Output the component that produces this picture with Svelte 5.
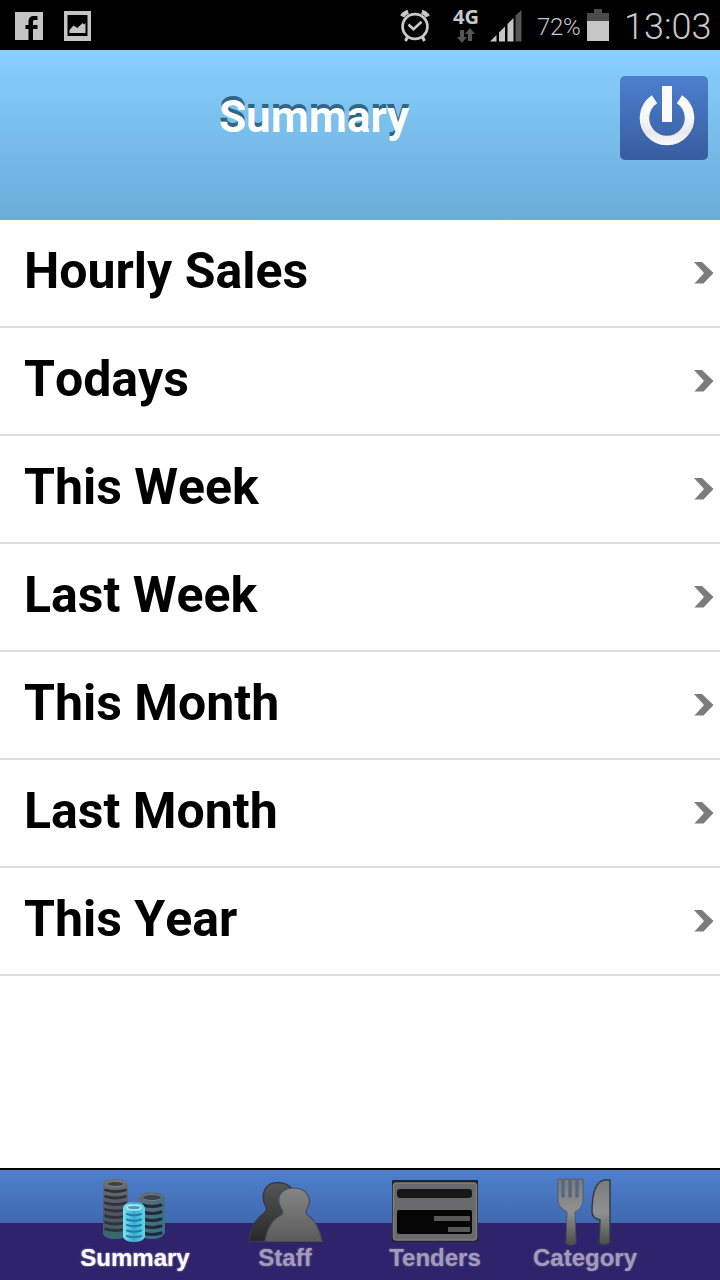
<script>
  const reports = [
    "Hourly Sales",
    "Todays",
    "This Week",
    "Last Week",
    "This Month",
    "Last Month",
    "This Year"
  ];

  const tabs = ["Summary", "Staff", "Tenders", "Category"];

  let active = "Summary";

  const tallStack = [0, 1, 2, 3, 4, 5, 6];
  const sideStack = [0, 1, 2, 3, 4];
  const frontStack = [0, 1, 2, 3, 4];
</script>

<div class="screen">
  <div class="status">
    <svg class="fb" width="28" height="28" viewBox="0 0 28 28">
      <rect width="28" height="28" fill="#c4c4c4" />
      <path d="M13.500 28V17h-3v-4h3V10C13.500 5.800 15.500 4 19 4h3.500v4H20c-1.500 0-2 .5-2 2v3h4.500v4H18v11z" fill="#000" />
    </svg>
    <svg class="photo" width="27" height="30" viewBox="0 0 27 30">
      <path d="M0 0h27v30H0zM3.500 4v21h20V4z" fill="#c4c4c4" fill-rule="evenodd" />
      <path d="M5.500 22v-3l4-4.500 4 2.500 5-5 1.500 1.500 1.500-1.500v10z" fill="#c4c4c4" />
    </svg>
    <svg class="alarm" width="30" height="33" viewBox="0 0 30 33">
      <g fill="none" stroke="#c8c8c8">
        <circle cx="15" cy="17.500" r="12.400" stroke-width="2.800" />
        <path d="M8.500 15.500l5 4.700 8-7.400" stroke-width="2.600" />
        <path d="M2.200 7.500Q4 4 8.200 2.800M27.800 7.500Q26 4 21.800 2.800" stroke-width="4.500" />
        <path d="M7.500 28l-2 4M22.500 28l2 4" stroke-width="3" />
      </g>
    </svg>
    <div class="network">
      <span>4G</span>
      <svg width="18" height="16" viewBox="0 0 18 16">
        <path d="M3 2h4v7h3l-5 6-5-6h3zM11 13h4V6h3l-5-6-5 6h3z" fill="#555" />
      </svg>
    </div>
    <svg class="signal" width="32" height="32" viewBox="0 0 32 32">
      <path d="M0 31.500l6.500-6.500v6.500zM9 31.500v-9l6-6v15zM17.500 31.500V14L23.500 8v23.500z" fill="#c6c6c6" />
      <path d="M25.500 31.500V5.500L31.500 0v31.500z" fill="#555" />
    </svg>
    <span class="percent">72%</span>
    <svg class="battery" width="22" height="32" viewBox="0 0 22 32">
      <path d="M0 12V4h7V0h8v4h7v8z" fill="#4b4b4b" />
      <rect y="12" width="22" height="20" fill="#c6c6c6" />
    </svg>
    <span class="clock">13:03</span>
  </div>

  <header>
    <h1>Summary</h1>
    <button class="power" aria-label="Log out">
      <svg width="56" height="62" viewBox="0 0 56 62">
        <defs>
          <linearGradient id="powerFill" x1="0" y1="0" x2="0" y2="62" gradientUnits="userSpaceOnUse">
            <stop offset="0" stop-color="#fff" />
            <stop offset=".5" stop-color="#f8f8fa" />
            <stop offset=".75" stop-color="#e8e8ec" />
            <stop offset="1" stop-color="#fff" />
          </linearGradient>
        </defs>
        <path d="M15.500 13.300A22.500 22.500 0 1 0 40.500 13.300" fill="none" stroke="url(#powerFill)" stroke-width="9.500" />
        <rect x="23" y="0" width="10" height="36" fill="#fafaff" />
      </svg>
    </button>
  </header>

  <ul>
    {#each reports as report}
      <li>
        <span>{report}</span>
        <svg width="20" height="22" viewBox="0 0 20 22">
          <path d="M0 0H8L19.500 11 9.500 21.500H.5L10 11z" fill="#7c7c7c" />
        </svg>
      </li>
    {/each}
  </ul>

  <nav>
    {#each tabs as tab}
      <button class="tab" class:active={tab === active} on:click={() => (active = tab)}>
        {#if tab === "Summary"}
          <svg width="72" height="70" viewBox="-2 0 72 70">
            <defs>
              <linearGradient id="stackTall" x1="0" y1="0" x2="0" y2="1">
                <stop offset="0" stop-color="#6d6f73" />
                <stop offset=".6" stop-color="#4f5662" />
                <stop offset="1" stop-color="#38696f" />
              </linearGradient>
              <linearGradient id="stackSide" x1="0" y1="0" x2="1" y2="1">
                <stop offset="0" stop-color="#66696f" />
                <stop offset="1" stop-color="#2b7589" />
              </linearGradient>
              <linearGradient id="stackFront" x1="0" y1="0" x2="1" y2="0">
                <stop offset="0" stop-color="#7be4f2" />
                <stop offset=".5" stop-color="#3ba9d0" />
                <stop offset="1" stop-color="#5fd6ec" />
              </linearGradient>
            </defs>
            <path d="M2 13Q3 8 14 8T27 13V63Q24 68 14 68T2 63z" fill="url(#stackTall)" />
            <ellipse cx="14.500" cy="13" rx="8.500" ry="2.500" fill="#3e4148" stroke="#858585" />
            {#each tallStack as n}
              <path d="M4.500 {19 + n * 6.500}q10 3 20 0" fill="none" stroke="#30323b" stroke-width="2.800" stroke-linecap="round" />
            {/each}
            <path d="M38 27Q40 21 51 21T64 27V62Q61 68 51 68T38 62z" fill="url(#stackSide)" />
            <ellipse cx="51" cy="26.500" rx="9.500" ry="3" fill="#3c4450" stroke="#777b82" />
            {#each sideStack as n}
              <path d="M42 {34 + n * 7}q9 3 18 0" fill="none" stroke="#202a3c" stroke-width="3" stroke-linecap="round" />
            {/each}
            <path d="M22 37Q23 31 33 31T44 37V66Q42 71 33 71T22 66z" fill="url(#stackFront)" />
            <ellipse cx="33" cy="36.500" rx="7" ry="2.500" fill="#4a9dc5" stroke="#b7edf6" stroke-width="1.500" />
            {#each frontStack as n}
              <path d="M26 {43 + n * 5.500}q7 2.500 14 0" fill="none" stroke="#207fa8" stroke-width="2" stroke-linecap="round" />
            {/each}
          </svg>
        {:else if tab === "Staff"}
          <svg width="76" height="70" viewBox="0 0 76 70">
            <defs>
              <linearGradient id="personBack" x1="0" y1="0" x2="0" y2="1">
                <stop offset="0" stop-color="#565656" />
                <stop offset="1" stop-color="#282828" />
              </linearGradient>
              <linearGradient id="personFront" x1="0" y1="0" x2="0" y2="1">
                <stop offset="0" stop-color="#858585" />
                <stop offset="1" stop-color="#5b5b5b" />
              </linearGradient>
            </defs>
            <path d="M2 70.500C3 58 9 48 17 42C20 40 20 37 18 34C13 22 19 11.500 31 11.500S51 22 48 33L38 70.500z" fill="url(#personBack)" stroke="#333b49" stroke-width="1.500" />
            <path d="M18 70.500C20 57 26 48 34 44C37 42 36 40 34 37C28 26 34 17 47 17S66 28 60 38C58 41 59 43 62 45C70 51 73 60 75 70.500z" fill="url(#personFront)" stroke="#454c58" stroke-width="1.200" />
          </svg>
        {:else if tab === "Tenders"}
          <svg width="86" height="70" viewBox="0 0 86 70">
            <rect y="9" width="86" height="62" rx="1" fill="#202329" />
            <rect x="1.500" y="12" width="83" height="57" rx="3" fill="#696a6b" stroke="#7b7d80" stroke-width="1.500" />
            <rect x="5" y="18" width="75" height="9" rx="3" fill="#171717" />
            <rect x="5" y="39" width="75" height="24" rx="2" fill="#050505" />
            <path d="M42 47.500h36M56 58.500h22" stroke="#575757" stroke-width="5" />
          </svg>
        {:else}
          <svg width="56" height="70" viewBox="0 0 56 70">
            <defs>
              <linearGradient id="cutlery" x1="0" y1="0" x2="0" y2="1">
                <stop offset="0" stop-color="#7b7b7b" />
                <stop offset=".5" stop-color="#919191" />
                <stop offset="1" stop-color="#4b4b4b" />
              </linearGradient>
            </defs>
            <path d="M1 8h4v18h2V8h5v18h2V8h5v18h2V8h5v21q0 8-8 12l1 31q-5 4-10 0l1-31q-9-5-9-12z" fill="url(#cutlery)" stroke="#4b515a" stroke-width=".8" />
            <path d="M53 9v63q-6 4-11 0l1-23q-8-2-8-8C35 28 37 10 48 9z" fill="url(#cutlery)" stroke="#343a44" stroke-width="1.500" />
          </svg>
        {/if}
        <span>{tab}</span>
      </button>
    {/each}
  </nav>
</div>

<style>
  :global(body) {
    margin: 0;
    background: #fff;
  }

  .screen {
    display: flex;
    flex-direction: column;
    width: 720px;
    height: 1280px;
    overflow: hidden;
    font-family: Roboto, sans-serif;
  }

  svg {
    display: block;
    flex: none;
  }

  .status {
    display: flex;
    align-items: flex-start;
    flex: none;
    height: 50px;
    background: #000;
    color: #c8c8c8;
  }

  .fb {
    margin: 12px 0 0 15px;
  }

  .photo {
    margin: 11px 0 0 21px;
  }

  .alarm {
    margin: 9px 0 0 309px;
  }

  .network {
    display: flex;
    flex-direction: column;
    align-items: center;
    width: 30px;
    margin: 7px 0 0 21px;
    font: bold 20px/20px "Open Sans", sans-serif;
  }

  .network svg {
    margin-top: 1px;
  }

  .signal {
    margin: 10px 0 0 9px;
  }

  .percent {
    width: 50px;
    margin-left: 15px;
    font-size: 24px;
    font-weight: 350;
    letter-spacing: -0.3px;
    line-height: 54px;
  }

  .battery {
    margin-top: 9px;
  }

  .clock {
    margin-left: 15px;
    font-size: 36px;
    font-weight: 350;
    line-height: 54px;
    white-space: nowrap;
  }

  header {
    display: flex;
    align-items: flex-start;
    justify-content: space-between;
    box-sizing: border-box;
    flex: none;
    height: 170px;
    padding: 26px 12px 0 219px;
    background: linear-gradient(#88cfff, #69add8);
  }

  h1 {
    margin: 0;
    color: #fff;
    font-size: 44px;
    line-height: 82px;
    text-shadow: 0 -4px 0 #2f6585;
  }

  button {
    border: 0;
    padding: 0;
    font: inherit;
  }

  .power {
    display: flex;
    width: 88px;
    height: 84px;
    padding: 10px 0 0 19px;
    box-sizing: border-box;
    border-radius: 5px;
    background: linear-gradient(#4c7fcf, #385c9f);
  }

  ul {
    flex: 1;
    margin: 0;
    padding: 0;
    list-style: none;
    background: #fff;
  }

  li {
    display: flex;
    align-items: center;
    justify-content: space-between;
    box-sizing: border-box;
    height: 108px;
    padding: 0 6px 0 24px;
    border-bottom: 2px solid #dedede;
    color: #000;
    font-size: 50px;
    font-weight: bold;
    font-kerning: none;
  }

  li span {
    line-height: 102px;
    padding-bottom: 4px;
  }

  nav {
    display: flex;
    box-sizing: border-box;
    flex: none;
    height: 112px;
    padding: 0 60px;
    border-top: 2px solid #000;
    background: linear-gradient(#4e80cc, #4069b0 53px, #2f236b 53px, #2f236b);
  }

  .tab {
    display: flex;
    flex-direction: column;
    align-items: center;
    width: 150px;
    padding-top: 1px;
    background: none;
    color: #a19cb9;
    font: bold 24px/28px "Liberation Sans", Arial, sans-serif;
    text-shadow: 0 0 2px #7a739f;
  }

  .tab svg {
    overflow: visible;
  }

  .tab span {
    margin-top: 3px;
  }

  .active {
    color: #fff;
    text-shadow: 0 0 2px #c9c5de;
  }
</style>
